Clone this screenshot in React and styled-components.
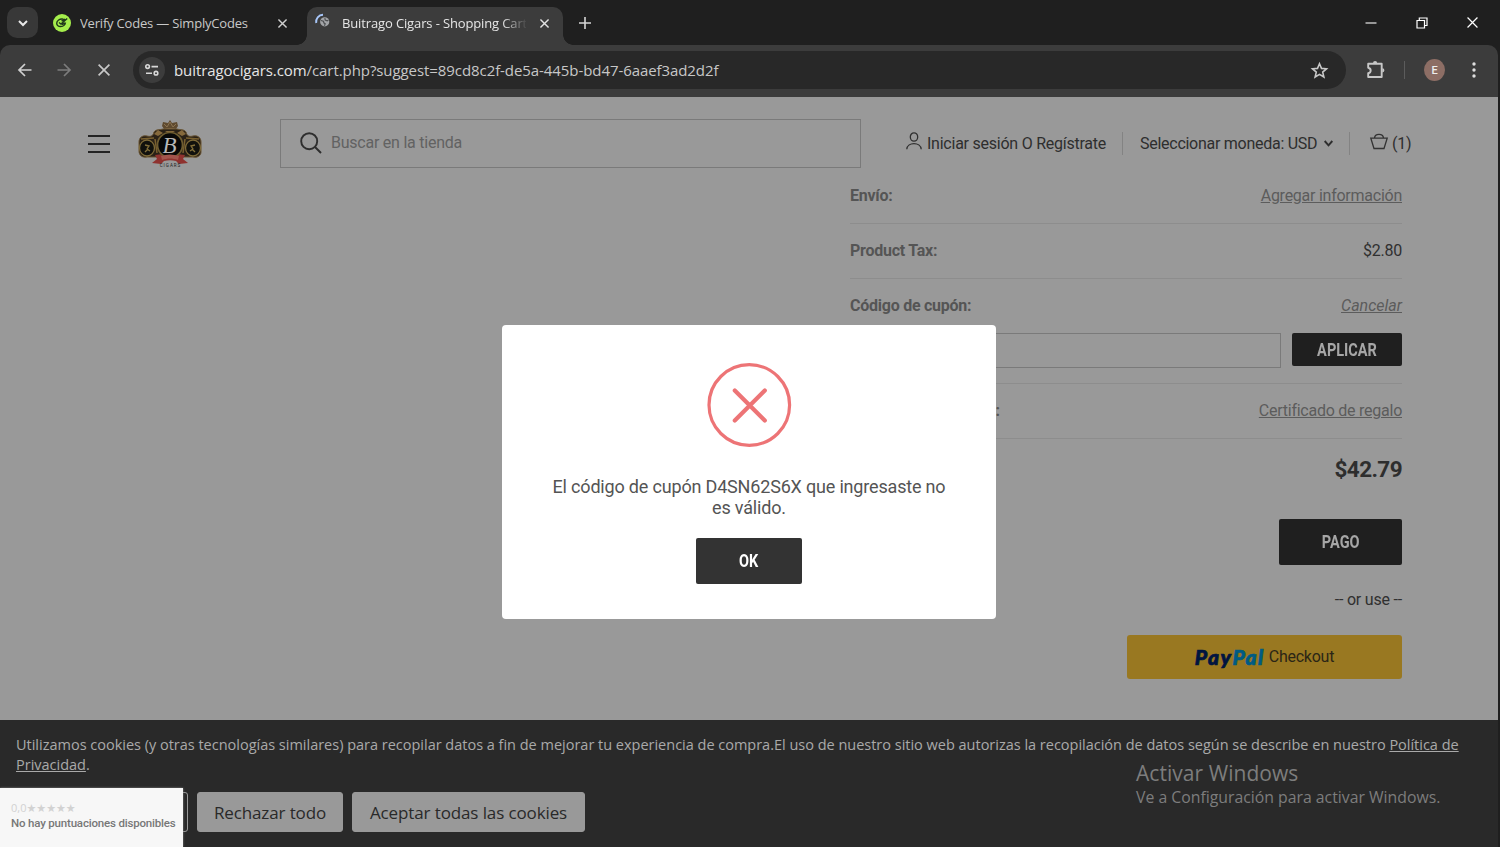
import React from "react";
import styled, { createGlobalStyle } from "styled-components";

const GlobalStyle = createGlobalStyle`
  * {
    box-sizing: border-box;
  }

  body {
    margin: 0;
    overflow: hidden;
    background: #1f1f1f;
    font-family: Roboto, sans-serif;
  }

  svg {
    display: block;
    flex: none;
    overflow: visible;
  }
`;

const Cross = ({ size = 9, width = 1.6, color = "#e3e3e3" }) => (
  <svg width={size} height={size} viewBox="0 0 10 10">
    <path d="M0.5 0.5L9.5 9.5M9.5 0.5L0.5 9.5" stroke={color} strokeWidth={width} />
  </svg>
);

const TabStrip = () => (
  <StyledStrip>
    <TabSearch>
      <svg width="10" height="6" viewBox="0 0 10 6" fill="none">
        <path d="M1 1l4 4 4-4" stroke="#e8e8e8" strokeWidth="2" />
      </svg>
    </TabSearch>
    <Tab $width={269} $left={15}>
      <svg width="18" height="18" viewBox="0 0 18 18" fill="none">
        <circle cx="9" cy="9" r="9" fill="#a5ee4c" />
        <path
          d="M10.5 5.200C6.500 4.400 3.700 6.800 3.700 9.300c0 2 1.800 3.300 4 3.200 2.600-.1 4.500-1.800 4.800-4M6 8.500l2 1.500 6.200-5.600M8.600 7l3.600-1.800M8.800 10.600l3.400-1.600"
          stroke="#20391a"
          strokeWidth="1.400"
        />
      </svg>
      <TabTitle $width={192} $ml={9} $spacing="-0.19px">Verify Codes — SimplyCodes</TabTitle>
      <Cross color="#cfcfcf" />
    </Tab>
    <Tab $active $width={256} $left={8}>
      <svg width="18" height="18" viewBox="0 0 18 18" fill="none">
        <path d="M1.200 9A7 7 0 0 1 8 0.800" stroke="#a8c7fa" strokeWidth="1.900" />
        <circle cx="9.700" cy="7.800" r="4.600" fill="#a2a4a7" />
        <path d="M6 6.500l2.400.8.600 1.700 1.200.800-.8 2M9.800 4.200l.4 1.800 2 .8 1.200-.6" stroke="#4c4e50" strokeWidth="1.200" />
      </svg>
      <TabTitle $active $width={184} $ml={9} $spacing="-0.13px">Buitrago Cigars - Shopping Cart</TabTitle>
      <CloseSlot>
        <Cross />
      </CloseSlot>
    </Tab>
    <NewTab>
      <svg width="12" height="12" viewBox="0 0 12 12">
        <path d="M6 0v12M0 6h12" stroke="#d5d5d5" strokeWidth="1.600" />
      </svg>
    </NewTab>
    <WindowControls>
      <Slot $width={51}>
        <svg width="11" height="11" viewBox="0 0 11 11">
          <path d="M.5 6h11" stroke="#e8e8e8" strokeWidth="1.200" />
        </svg>
      </Slot>
      <Slot $width={51}>
        <svg width="12" height="12" viewBox="0 0 12 12" fill="none" stroke="#fff" strokeWidth="1.200">
          <path d="M1 3.500h7.500v7.500H1zM3.300 3.300V1H11v7.500H8.700" />
        </svg>
      </Slot>
      <Slot $width={51}>
        <Cross size={11} width={1.1} color="#fff" />
      </Slot>
    </WindowControls>
  </StyledStrip>
);

const Toolbar = () => (
  <StyledToolbar>
    <Slot $width={39.5}>
      <svg width="14" height="14" viewBox="0 0 14 14" fill="none">
        <path d="M13.500 7H1.500M7 1L1 7l6 6" stroke="#d0d0d0" strokeWidth="1.700" />
      </svg>
    </Slot>
    <Slot $width={39.5}>
      <svg width="14" height="14" viewBox="0 0 14 14" fill="none">
        <path d="M.5 7h12M7 1l6 6-6 6" stroke="#7c7c7c" strokeWidth="1.700" />
      </svg>
    </Slot>
    <Slot $width={39.5}>
      <Cross size={12} width={1.4} color="#c8c8c8" />
    </Slot>
    <AddressBar>
      <SiteInfo>
        <svg width="14" height="12" viewBox="0 0 14 12" fill="none" stroke="#d8d8d8" strokeWidth="1.600">
          <circle cx="2.600" cy="2.600" r="1.800" />
          <path d="M6.500 2.600H13M1 9.200h6" />
          <circle cx="11" cy="9.200" r="1.800" />
        </svg>
      </SiteInfo>
      <Url>
        <b>buitragocigars.com</b>/cart.php?suggest=89cd8c2f-de5a-445b-bd47-6aaef3ad2d2f
      </Url>
      <svg width="17" height="17" viewBox="0 0 17 17" fill="none">
        <path
          d="M8.500 1.800l2 4.600 5 .4-3.800 3.300 1.200 4.900-4.400-2.600L4.100 15l1.200-4.900L1.500 6.800l5-.4z"
          stroke="#c8c8c8"
          strokeWidth="1.600"
        />
      </svg>
    </AddressBar>
    <Extensions>
      <svg width="18" height="18" viewBox="0 0 18 18" fill="none">
        <path
          d="M1.200 2.700H14.700V16H1.200V12.200C4.500 11.500 4.500 7.500 1.200 6.800Z"
          stroke="#c8c8c8"
          strokeWidth="1.900"
          strokeLinejoin="round"
        />
        <path d="M6 2.200a2.100 2.100 0 0 1 4.200 0zM15.300 7.200a2.100 2.100 0 0 1 0 4.200z" fill="#c8c8c8" />
      </svg>
    </Extensions>
    <Divider />
    <Avatar>E</Avatar>
    <svg width="4" height="16" viewBox="0 0 4 16" fill="#dedede">
      <circle cx="2" cy="2" r="1.700" />
      <circle cx="2" cy="8" r="1.700" />
      <circle cx="2" cy="14" r="1.700" />
    </svg>
  </StyledToolbar>
);

const Crest = () => (
  <svg width="64" height="48" viewBox="0 0 64 48" fill="none">
    <path d="M32 0l2 3 5-1 1 4-2 3 1 4H25l1-4-2-3 1-4 5 1z" fill="#5f4a2f" />
    <path d="M26 4l3 3 3-5 3 5 3-3M25 10c3-2 11-2 14 0" stroke="#8a7350" strokeWidth="1" />
    <path
      d="M1 22c0-4 3-7 8-6 4 1 6 0 7-4 2-3 6-2 9-3h14c3 1 7 0 9 3 1 4 3 5 7 4 5-1 8 2 8 6v10c0 4-4 6-8 5H9c-5 1-8-2-8-6z"
      fill="#2a2117"
      stroke="#6a5431"
      strokeWidth="1"
    />
    <path d="M16 14l4-4 5 3-5 3zM48 14l-4-4-5 3 5 3zM27 11h10l-5 3z" fill="#85693c" />
    <path d="M17 19l2 14M47 19l-2 14M3 19l13-1M61 19l-13-1" stroke="#79602f" strokeWidth="1.500" />
    <ellipse cx="9" cy="28" rx="7.500" ry="8" fill="#11110d" stroke="#7e6a38" strokeWidth="1.300" />
    <ellipse cx="55" cy="28" rx="7.500" ry="8" fill="#11110d" stroke="#7e6a38" strokeWidth="1.300" />
    <path d="M7 25l4 1-2 3 3 2M7 32l3-3M57 25l-4 1 2 3-3 2M57 32l-3-3" stroke="#84703a" strokeWidth="1.300" />
    <path d="M17 35l8-1 7 2 7-2 8 1-2 4 5 4-9 1-3-3c-4-1-8-1-12 0l-3 3-9-1 5-4z" fill="#8f322f" />
    <circle cx="32" cy="25" r="12.500" fill="#080808" stroke="#6e5c30" strokeWidth="1.700" />
    <path d="M23 36c6-2 12-2 18 0l-1 4c-6-2-10-2-16 0z" fill="#a3544c" />
    <text
      x="31.500"
      y="33"
      textAnchor="middle"
      fontFamily="Liberation Serif, serif"
      fontStyle="italic"
      fontSize="23"
      fill="#b8b8b8"
    >
      B
    </text>
    <text x="32.500" y="47" textAnchor="middle" fontFamily="Roboto, sans-serif" fontSize="4.500" letterSpacing="1" fill="#222">
      CIGARS
    </text>
  </svg>
);

const StoreHeader = () => (
  <StyledHeader>
    <MenuIcon width="22" height="18" viewBox="0 0 22 18">
      <path d="M0 1h22M0 9h22M0 17h22" stroke="#242424" strokeWidth="1.900" />
    </MenuIcon>
    <LogoLink>
      <Crest />
    </LogoLink>
    <SearchBox>
      <svg width="22" height="22" viewBox="0 0 22 22" fill="none" stroke="#2e2e2e" strokeWidth="1.900">
        <circle cx="9.200" cy="9.200" r="8" />
        <path d="M15 15l6 6" />
      </svg>
      <span>Buscar en la tienda</span>
    </SearchBox>
    <Account>
      <svg width="16" height="18" viewBox="0 0 16 18" fill="none" stroke="#303030" strokeWidth="1.300">
        <ellipse cx="8" cy="5" rx="3.700" ry="4.200" />
        <path d="M.8 17.300C1.300 9.700 14.700 9.700 15.200 17.300" />
      </svg>
      <NavText $spacing="-0.24px">Iniciar sesión O Regístrate</NavText>
    </Account>
    <Currency>
      <NavText $spacing="-0.27px">Seleccionar moneda: USD</NavText>
      <svg width="9" height="7" viewBox="0 0 9 7" fill="none">
        <path d="M.7 1l3.800 4.300L8.300 1" stroke="#2e2e2e" strokeWidth="1.900" />
      </svg>
    </Currency>
    <Cart>
      <svg width="18" height="17" viewBox="0 0 18 17" fill="none" stroke="#333" strokeWidth="1.300">
        <path d="M.8 5.200h16.400L14 15.500H4zM4.500 5C5 .2 13 .2 13.500 5" />
      </svg>
      <NavText $spacing="-0.2px">(1)</NavText>
    </Cart>
  </StyledHeader>
);

const Totals = () => (
  <StyledTotals>
    <Row>
      <Label>Envío:</Label>
      <TextLink>Agregar información</TextLink>
    </Row>
    <Row>
      <Label>Product Tax:</Label>
      <Value>$2.80</Value>
    </Row>
    <CouponRow>
      <CouponHead>
        <Label>Código de cupón:</Label>
        <TextLink $italic>Cancelar</TextLink>
      </CouponHead>
      <CouponForm>
        <CouponInput />
        <ApplyButton $width={110} $height={33}>
          <ButtonLabel>APLICAR</ButtonLabel>
        </ApplyButton>
      </CouponForm>
    </CouponRow>
    <Row>
      <Label>Certificado de regalo:</Label>
      <TextLink>Certificado de regalo</TextLink>
    </Row>
    <GrandTotal>
      <Label>Total general:</Label>
      <Price>$42.79</Price>
    </GrandTotal>
    <Actions>
      <DarkButton $width={123.5} $height={46}>
        <ButtonLabel>PAGO</ButtonLabel>
      </DarkButton>
      <OrUse>-- or use --</OrUse>
      <PayPalButton>
        <PayPalMark>
          Pay<em>Pal</em>
        </PayPalMark>
        <span>Checkout</span>
      </PayPalButton>
    </Actions>
  </StyledTotals>
);

const ErrorModal = () => (
  <Modal>
    <svg width="84" height="84" viewBox="0 0 84 84" fill="none" stroke="#ed7476">
      <circle cx="42.300" cy="42" r="40.300" strokeWidth="3.200" />
      <path d="M27.800 27.500l30 30M57.800 27.500l-30 30" strokeWidth="4.200" strokeLinecap="round" />
    </svg>
    <Message>
      El código de cupón D4SN62S6X que ingresaste no
      <br />
      es válido.
    </Message>
    <DarkButton $bright $width={106} $height={46}>
      <ButtonLabel>OK</ButtonLabel>
    </DarkButton>
  </Modal>
);

const CookieBar = () => (
  <StyledCookies>
    <CookieText>
      Utilizamos cookies (y otras tecnologías similares) para recopilar datos a fin de mejorar tu experiencia de
      compra.El uso de nuestro sitio web autorizas la recopilación de datos según se describe en nuestro{" "}
      <u>Política de</u>
      <br />
      <u>Privacidad</u>.
    </CookieText>
    <CookieButtons>
      <CookieButton $outline $width={172} />
      <CookieButton $width={146}>Rechazar todo</CookieButton>
      <CookieButton $width={233}>Aceptar todas las cookies</CookieButton>
    </CookieButtons>
    <Rating>
      <Stars>0,0★★★★★</Stars>
      <NoRatings>No hay puntuaciones disponibles</NoRatings>
    </Rating>
    <Watermark>
      <WatermarkTitle>Activar Windows</WatermarkTitle>
      <WatermarkHint>Ve a Configuración para activar Windows.</WatermarkHint>
    </Watermark>
  </StyledCookies>
);

const App = () => (
  <Window>
    <GlobalStyle />
    <TabStrip />
    <Toolbar />
    <Page>
      <StoreHeader />
      <Totals />
      <CookieBar />
      <ErrorModal />
    </Page>
  </Window>
);

const Window = styled.div`
  display: flex;
  flex-direction: column;
  width: 1500px;
  height: 847px;
  padding-right: 2px;
  overflow: hidden;
  background: #1f1f1f;
`;

const Slot = styled.div`
  display: flex;
  flex: none;
  align-items: center;
  justify-content: center;
  width: ${(props) => props.$width}px;
`;

/* browser chrome */

const StyledStrip = styled.div`
  display: flex;
  flex: none;
  height: 45px;
  padding: 7px 0 0 7px;
  background: #1f1f1f;
`;

const TabSearch = styled.div`
  display: flex;
  align-items: center;
  justify-content: center;
  width: 31px;
  height: 31px;
  border-radius: 10px;
  background: #383838;
`;

const Tab = styled.div`
  position: relative;
  display: flex;
  align-items: center;
  width: ${(props) => props.$width}px;
  height: 38px;
  padding: 0 0 6px ${(props) => props.$left}px;
  border-radius: 10px 10px 0 0;
  background: ${(props) => (props.$active ? "#3c3c3c" : "transparent")};

  /* curved feet of the selected tab */
  &::before,
  &::after {
    content: "";
    display: ${(props) => (props.$active ? "block" : "none")};
    position: absolute;
    bottom: 0;
    width: 10px;
    height: 10px;
  }

  &::before {
    left: -10px;
    background: radial-gradient(circle at 0 0, transparent 9.5px, #3c3c3c 10px);
  }

  &::after {
    right: -10px;
    background: radial-gradient(circle at 100% 0, transparent 9.5px, #3c3c3c 10px);
  }
`;

const TabTitle = styled.span`
  flex: none;
  width: ${(props) => props.$width}px;
  margin-left: ${(props) => props.$ml}px;
  margin-right: 6px;
  overflow: hidden;
  font: 13px/18px "Open Sans", sans-serif;
  letter-spacing: ${(props) => props.$spacing};
  white-space: nowrap;
  color: ${(props) => (props.$active ? "#e6e6e6" : "#c9c9c9")};
  mask-image: ${(props) => (props.$active ? "linear-gradient(90deg, #000 160px, transparent 186px)" : "none")};
`;

const CloseSlot = styled.div`
  margin-left: 8px;
`;

const NewTab = styled.div`
  display: flex;
  align-items: center;
  height: 31px;
  margin-left: 16px;
`;

const WindowControls = styled.div`
  display: flex;
  height: 31px;
  margin-left: auto;
`;

const StyledToolbar = styled.div`
  display: flex;
  flex: none;
  align-items: center;
  height: 52px;
  padding: 0 22px 2px 5px;
  border-radius: 10px 10px 0 0;
  background: #3c3c3c;
`;

const AddressBar = styled.div`
  display: flex;
  flex: none;
  align-items: center;
  width: 1213px;
  height: 38px;
  margin-left: 9.5px;
  padding: 0 18px 0 6px;
  border-radius: 19px;
  background: #282828;
`;

const SiteInfo = styled.div`
  display: flex;
  align-items: center;
  justify-content: center;
  width: 26px;
  height: 26px;
  border-radius: 50%;
  background: #3c3c3c;
`;

const Url = styled.span`
  flex: 1;
  margin-left: 9px;
  font: 15px/20px "Open Sans", sans-serif;
  letter-spacing: -0.075px;
  white-space: nowrap;
  color: #c7c7c7;

  b {
    font-weight: 400;
    color: #e6e6e6;
  }
`;

const Extensions = styled(Slot)`
  width: 57.5px;
  padding-left: 3px;
`;

const Divider = styled.div`
  width: 2px;
  height: 18px;
  background: #5c5c5c;
`;

const Avatar = styled.div`
  display: flex;
  align-items: center;
  justify-content: center;
  width: 22px;
  height: 22px;
  margin: 0 27px 0 19px;
  border-radius: 50%;
  background: #8d6e65;
  color: #eee;
  font: 500 11px Roboto, sans-serif;
`;

/* store page */

const Page = styled.div`
  position: relative;
  display: flex;
  flex: 1;
  flex-direction: column;
  background: #999;
`;

const StyledHeader = styled.header`
  display: flex;
  flex: none;
  align-items: center;
  height: 71px;
  margin-bottom: 1px;
  padding: 22px 0 0 88px;
`;

const MenuIcon = styled.svg`
  margin-top: 1px;
`;

const LogoLink = styled.div`
  margin: 1px 1px 0 28px;
`;

const SearchBox = styled.div`
  display: flex;
  align-items: center;
  gap: 9px;
  width: 581px;
  height: 49px;
  margin-left: 77px;
  padding-left: 19px;
  border: 1px solid #7a7a7a;
  color: #626262;
  font-size: 16px;

  svg {
    margin-top: -1px;
  }

  span {
    margin-top: -2px;
    letter-spacing: -0.24px;
  }
`;

const NavText = styled.span`
  color: #2e2e2e;
  font-size: 16px;
  line-height: 20px;
  letter-spacing: ${(props) => props.$spacing || "0"};
  white-space: nowrap;
`;

const NavItem = styled.div`
  display: flex;
  align-items: center;
  height: 23px;
`;

const Account = styled(NavItem)`
  gap: 5px;
  width: 217px;
  margin-left: 45px;
  border-right: 1px solid #838383;

  svg {
    margin-top: -5px;
  }
`;

const Currency = styled(NavItem)`
  gap: 7px;
  width: 227px;
  padding-left: 17px;
  border-right: 1px solid #838383;
`;

const Cart = styled(NavItem)`
  gap: 4px;
  padding-left: 20px;

  svg {
    margin-top: -4px;
  }
`;

const StyledTotals = styled.section`
  flex: 1;
  width: 552px;
  margin-left: 850px;
  color: #303030;
  font-size: 15px;
`;

const Row = styled.div`
  display: flex;
  align-items: center;
  justify-content: space-between;
  height: 55px;
  padding-bottom: 1px;
  border-bottom: 1px solid #8d8d8d;
`;

const CouponRow = styled.div`
  height: 105px;
  border-bottom: 1px solid #8d8d8d;
`;

const CouponHead = styled.div`
  display: flex;
  align-items: center;
  justify-content: space-between;
  height: 54px;
  padding-bottom: 1px;
`;

const CouponForm = styled.div`
  display: flex;
  justify-content: space-between;
`;

const CouponInput = styled.div`
  width: 431px;
  height: 35px;
  border: 1px solid #7a7a7a;
`;

const Label = styled.span`
  color: #555;
  font-size: 16px;
  font-weight: 700;
  letter-spacing: -0.25px;
`;

const Value = styled.span`
  color: #303030;
  font-size: 16px;
  letter-spacing: -0.25px;
`;

const TextLink = styled.span`
  color: #5c5c5c;
  font-size: 16px;
  font-style: ${(props) => (props.$italic ? "italic" : "normal")};
  letter-spacing: ${(props) => (props.$italic ? "0" : "-0.25px")};
  text-decoration: underline;
`;

const DarkButton = styled.div`
  display: flex;
  flex: none;
  align-items: center;
  justify-content: center;
  width: ${(props) => props.$width}px;
  height: ${(props) => props.$height}px;
  border-radius: 2px;
  background: ${(props) => (props.$bright ? "#333" : "#1f1f1f")};
  color: ${(props) => (props.$bright ? "#fff" : "#a6a6a6")};
`;

const ApplyButton = styled(DarkButton)`
  padding-top: 2px;
`;

const ButtonLabel = styled.span`
  margin-top: -1px;
  font-size: 17.5px;
  font-weight: 700;
  transform: scaleX(0.83);
`;

const GrandTotal = styled.div`
  display: flex;
  align-items: center;
  justify-content: space-between;
  height: 60px;
`;

const Price = styled.span`
  color: #2e2e2e;
  font-size: 22.5px;
  font-weight: 700;
  letter-spacing: -0.6px;
`;

const Actions = styled.div`
  display: flex;
  flex-direction: column;
  align-items: flex-end;
  padding-top: 20px;
`;

const OrUse = styled.span`
  margin: 25px 0;
  font-size: 16px;
  line-height: 20px;
  letter-spacing: -0.2px;
`;

const PayPalButton = styled.div`
  display: flex;
  align-items: center;
  justify-content: center;
  gap: 4px;
  width: 275px;
  height: 44px;
  padding-bottom: 1px;
  border-radius: 3px;
  background: #997821;
  color: #2b2616;
  font-size: 16px;
  letter-spacing: -0.25px;
`;

const PayPalMark = styled.strong`
  margin-top: -1px;
  color: #001440;
  font: italic 900 21px Lato, sans-serif;
  letter-spacing: 1.5px;
  -webkit-text-stroke: 0.7px currentColor;

  em {
    color: #005b83;
  }
`;

/* overlays */

const Modal = styled.div`
  position: absolute;
  top: 228px;
  left: 502px;
  display: flex;
  flex-direction: column;
  align-items: center;
  width: 494px;
  height: 294px;
  padding-top: 38px;
  border-radius: 4px;
  background: #fff;
`;

const Message = styled.p`
  margin: 29px 0 20px;
  color: #545454;
  font-size: 18px;
  line-height: 21px;
  letter-spacing: -0.18px;
  text-align: center;
  white-space: nowrap;
`;

const StyledCookies = styled.footer`
  position: relative;
  flex: none;
  height: 127px;
  padding: 15px 0 0 16px;
  background: #292929;
`;

const CookieText = styled.p`
  margin: 0;
  color: #a9a9a9;
  font: 14.5px/20px "Open Sans", sans-serif;
  letter-spacing: -0.01px;
  white-space: nowrap;
`;

const CookieButtons = styled.div`
  display: flex;
  gap: 9px;
  margin-top: 17px;
`;

const CookieButton = styled.div`
  display: flex;
  align-items: center;
  justify-content: center;
  width: ${(props) => props.$width}px;
  height: 40px;
  border: 1px solid #999;
  border-radius: 3px;
  background: ${(props) => (props.$outline ? "transparent" : "#999")};
  color: #292929;
  font: 17px "Open Sans", sans-serif;
  letter-spacing: -0.12px;
  white-space: nowrap;
`;

const Rating = styled.div`
  position: absolute;
  left: 0;
  bottom: 0;
  width: 183px;
  height: 59px;
  padding: 12px 0 0 11px;
  background: #f7f7f7;
  box-shadow: 0 0 2px #888;
  white-space: nowrap;
`;

const Stars = styled.div`
  color: #d2d2d2;
  font: 11px/15px "Open Sans", "DejaVu Sans", sans-serif;
`;

const NoRatings = styled.div`
  color: #777;
  font: 500 11.5px/16px Roboto, sans-serif;
  letter-spacing: -0.18px;
`;

const Watermark = styled.div`
  position: absolute;
  top: 40px;
  left: 1136px;
  color: #7d7d7d;
  font-family: "Open Sans", sans-serif;
  white-space: nowrap;
`;

const WatermarkTitle = styled.div`
  font-size: 21px;
  line-height: 26px;
  letter-spacing: 0.05px;
`;

const WatermarkHint = styled.div`
  font-size: 15.8px;
  line-height: 23px;
`;

export default App;
